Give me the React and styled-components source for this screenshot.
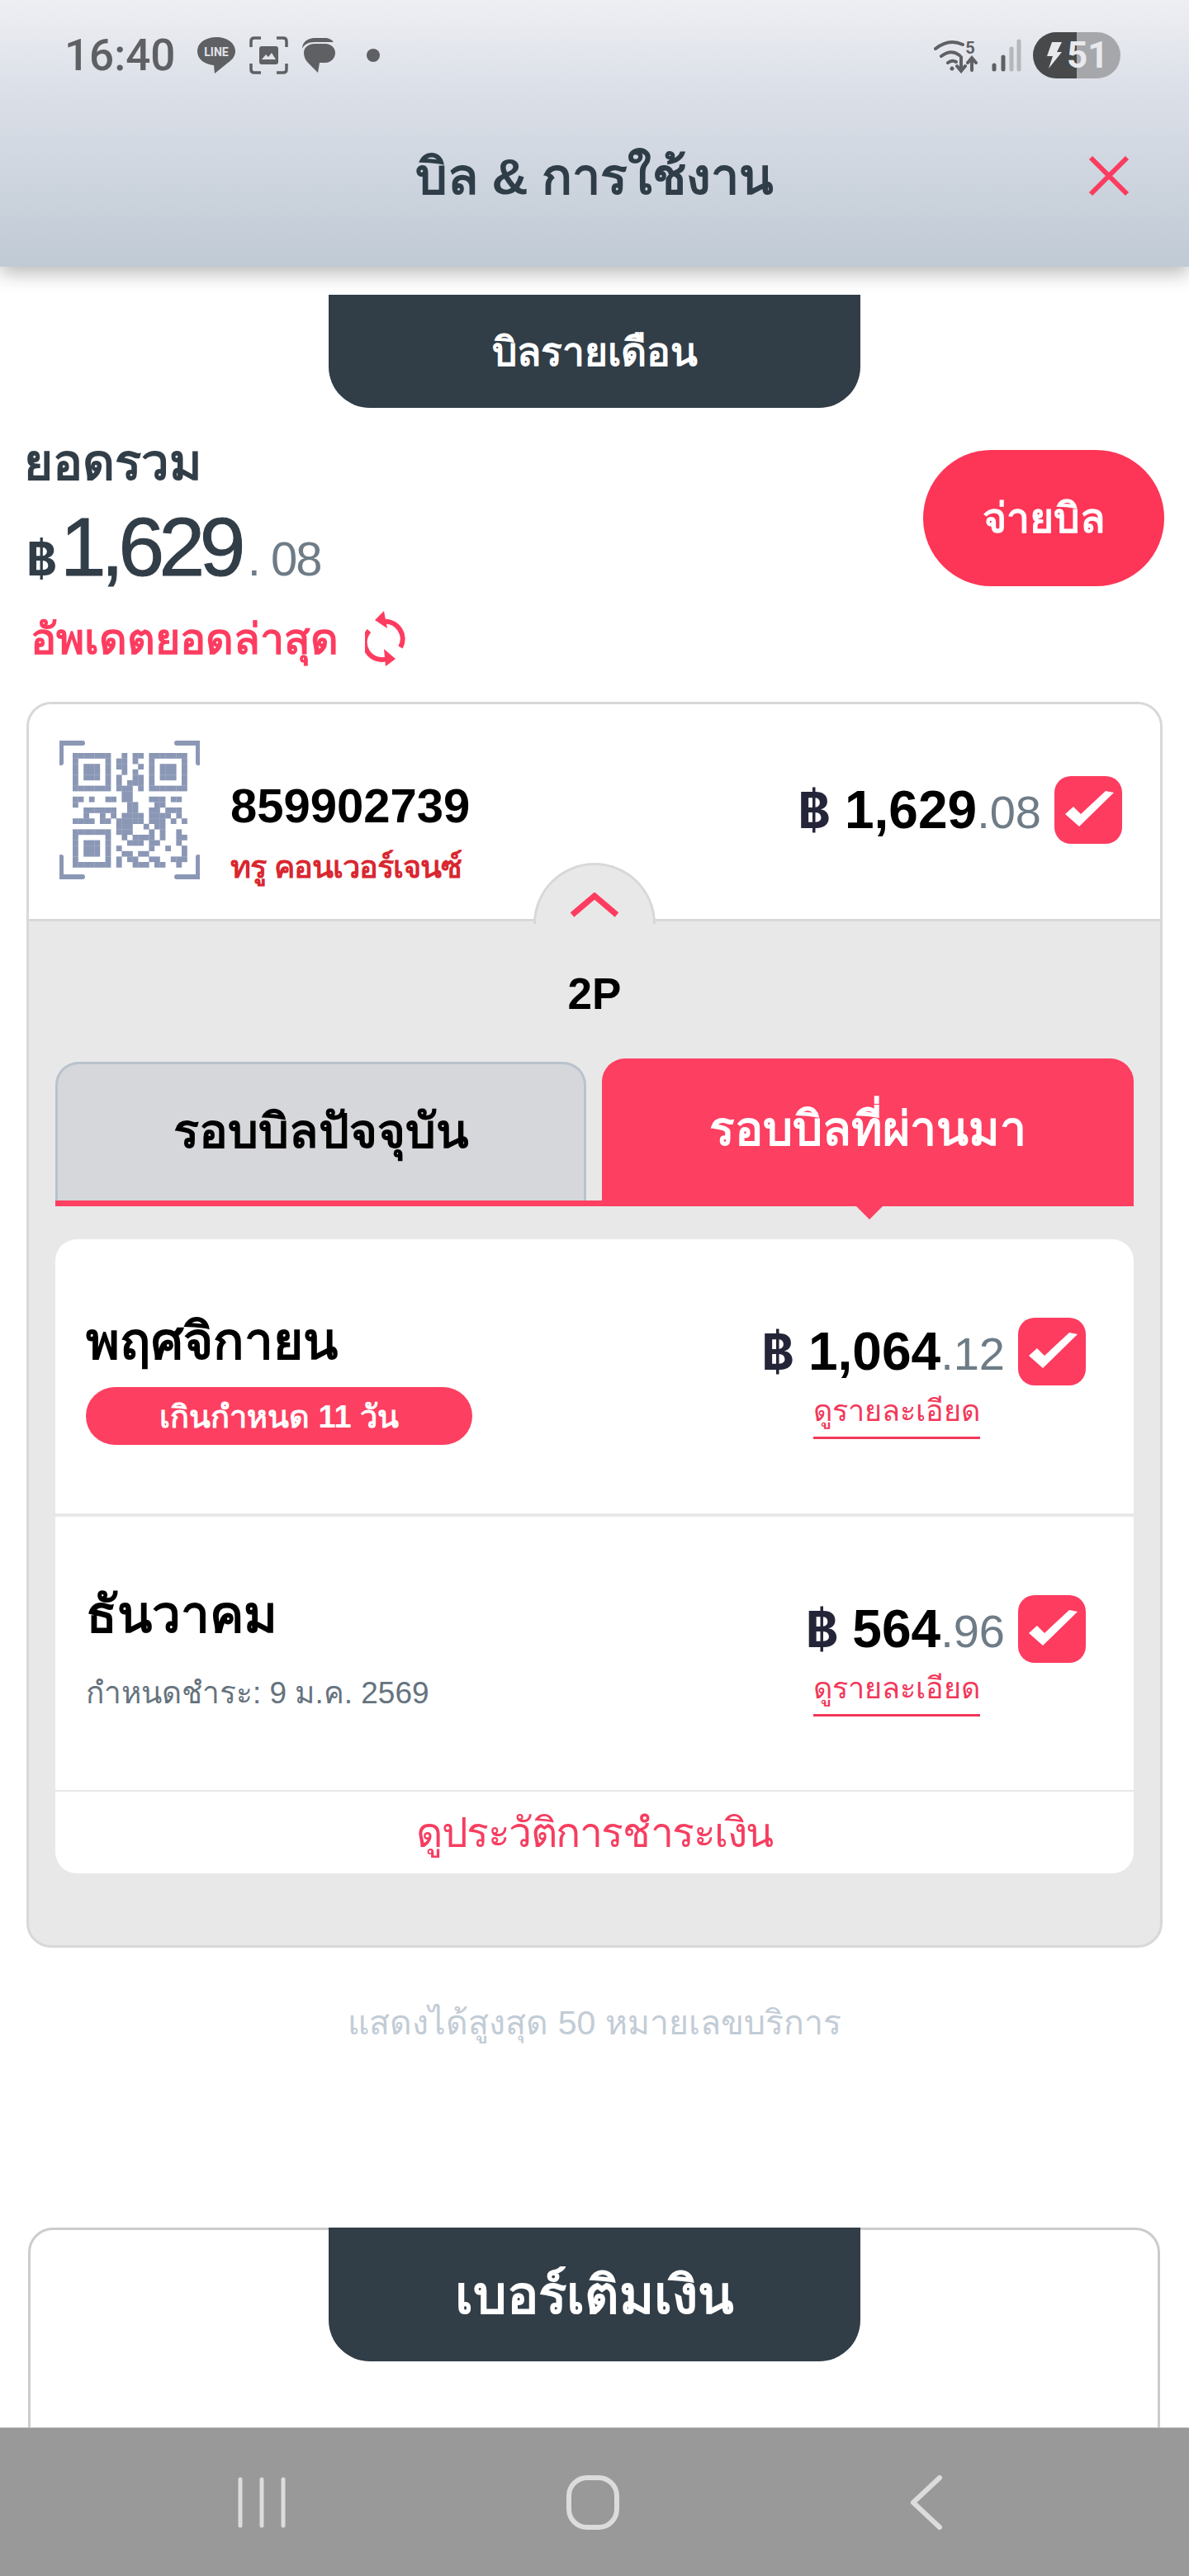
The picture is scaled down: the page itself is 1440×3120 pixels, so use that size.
import styled, { createGlobalStyle } from "styled-components";

const FONT = `"Liberation Sans", "Noto Sans", "DejaVu Sans", sans-serif`;
const RED = "#fd3c60";
const DARK = "#313d47";

const GlobalStyle = createGlobalStyle`
  html, body { margin: 0; padding: 0; background: #fff; }
  * { box-sizing: border-box; }
`;

const Page = styled.div`
  position: relative;
  width: 1440px;
  height: 3120px;
  overflow: hidden;
  background: #fff;
  font-family: ${FONT};
`;

const Header = styled.header`
  height: 323px;
  padding: 39px 74px 0 78px;
  background: linear-gradient(#eeeff3, #dde1e9 30%, #c0cad5);
  box-shadow: 0 8px 22px rgba(0, 0, 0, 0.28);
`;

const StatusBar = styled.div`
  display: flex;
  justify-content: space-between;
  align-items: center;
  height: 56px;
  padding-right: 9px;
  color: #5f6064;
`;

const StatusGroup = styled.div`
  display: flex;
  align-items: center;
  gap: ${(p) => p.$gap || 16}px;
`;

const Clock = styled.span`
  font-family: Roboto, sans-serif;
  font-size: 53px;
  font-weight: 500;
  margin-right: 10px;
`;

const Battery = styled.div`
  position: relative;
  width: 106px;
  height: 56px;
  border-radius: 28px;
  overflow: hidden;
  display: flex;
  align-items: center;
  background: linear-gradient(90deg, #48494b 50%, #a6a7ab 50%);
  color: #e8e9ec;
  padding-left: 15px;
  gap: 6px;
  font-family: Roboto, sans-serif;
  font-size: 44px;
  font-weight: 700;
`;

const TitleRow = styled.div`
  position: relative;
  display: flex;
  justify-content: center;
  align-items: center;
  margin-top: 88px;
  margin-left: -78px;
  margin-right: -74px;
  height: 60px;
`;

const Title = styled.h1`
  margin: 0;
  font-size: 61px;
  font-weight: 700;
  color: #2f3d49;
`;

const Close = styled.svg`
  position: absolute;
  right: 72px;
  top: 5px;
`;

const Tab = styled.div`
  display: flex;
  justify-content: center;
  align-items: center;
  width: 644px;
  height: ${(p) => p.$h}px;
  margin: 0 auto;
  background: ${DARK};
  color: #fff;
  font-size: ${(p) => p.$size}px;
  font-weight: 700;
  border-radius: 0 0 50px 50px;
`;

const Main = styled.main`
  padding: 34px 32px 0;
`;

const Summary = styled.section`
  display: flex;
  justify-content: space-between;
  align-items: flex-start;
  margin-top: 30px;
  height: 326px;
`;

const SummaryLabel = styled.div`
  font-size: 60px;
  font-weight: 700;
  color: ${DARK};
  line-height: 74px;
  margin-left: -3px;
`;

const SummaryAmount = styled.div`
  display: flex;
  align-items: baseline;
  color: ${DARK};
  height: 112px;
  line-height: 112px;
  margin-top: 8px;
`;

const Baht = styled.span`
  font-family: Inter, ${FONT};
  font-weight: 700;
  font-size: ${(p) => p.$size}px;
  color: ${(p) => p.$color || "#25253a"};
  margin-right: ${(p) => p.$gap || 0}px;
`;

const BigNumber = styled.span`
  font-size: 100px;
  letter-spacing: -6.5px;
  -webkit-text-stroke: 1px ${DARK};
`;

const BigDecimal = styled.span`
  font-size: 58px;
  color: #6e7c87;
  margin-left: 9px;
  letter-spacing: -2px;
`;

const UpdateRow = styled.div`
  display: flex;
  align-items: center;
  gap: 32px;
  margin-top: 14px;
  margin-left: 5px;
  font-size: 52px;
  font-weight: 700;
  color: ${RED};
`;

const PayButton = styled.button`
  width: 292px;
  height: 165px;
  margin-top: 21px;
  margin-right: -2px;
  border: 0;
  border-radius: 83px;
  background: #fd3557;
  color: #fff;
  font-family: inherit;
  font-size: 50px;
  font-weight: 700;
`;

const AccountCard = styled.section`
  position: relative;
  border: 3px solid #d8d8d8;
  border-radius: 30px;
  overflow: hidden;
  height: 1509px;
  background: #e8e8e8;
`;

const AccountTop = styled.div`
  display: flex;
  align-items: center;
  height: 263px;
  padding: 0 46px 4px 37px;
  background: #fff;
  border-bottom: 3px solid #d8d8d8;
`;

const AccountInfo = styled.div`
  margin-left: 37px;
  padding-top: 58px;
  flex: 1;
`;

const AccountNumber = styled.div`
  font-size: 58px;
  font-weight: 700;
  color: #000;
  line-height: 70px;
`;

const AccountPlan = styled.div`
  font-size: 38px;
  font-weight: 700;
  letter-spacing: -1px;
  color: #d9262f;
  margin-top: 8px;
`;

const Dome = styled.div`
  position: absolute;
  left: 611px;
  top: 192px;
  width: 148px;
  height: 74px;
  display: flex;
  justify-content: center;
  padding-top: 33px;
  background: #e8e8e8;
  border: 3px solid #d8d8d8;
  border-bottom: 0;
  border-radius: 74px 74px 0 0;
`;

const Plan = styled.div`
  text-align: center;
  font-size: 53px;
  font-weight: 700;
  color: #000;
  margin-top: 58px;
  line-height: 60px;
`;

const Tabs = styled.div`
  display: flex;
  align-items: flex-end;
  margin: 48px 32px 0;
  height: 179px;
  border-bottom: 7px solid #fd3f61;
`;

const BillTab = styled.div`
  position: relative;
  display: flex;
  justify-content: center;
  align-items: center;
  height: ${(p) => (p.$active ? 172 : 168)}px;
  width: ${(p) => (p.$active ? 644 : 643)}px;
  margin-left: ${(p) => (p.$active ? 19 : 0)}px;
  padding-bottom: 5px;
  font-size: ${(p) => (p.$active ? 57 : 58)}px;
  font-weight: 700;
  color: ${(p) => (p.$active ? "#fff" : "#000")};
  background: ${(p) => (p.$active ? "#fd3f61" : "#d6d7da")};
  border: 3px solid ${(p) => (p.$active ? "#fd3f61" : "#b9c2cc")};
  border-bottom: 0;
  border-radius: 28px 28px 0 0;
`;

const TabArrow = styled.span`
  position: absolute;
  left: 305px;
  bottom: -23px;
  border-left: 16px solid transparent;
  border-right: 16px solid transparent;
  border-top: 16px solid #fd3f61;
`;

const BillList = styled.div`
  margin: 40px 32px 0;
  background: #fff;
  border-radius: 26px;
  overflow: hidden;
`;

const BillRow = styled.div`
  display: flex;
  justify-content: space-between;
  height: ${(p) => p.$h}px;
  padding: 0 58px 0 37px;
  border-bottom: ${(p) => p.$line}px solid #e8e8e8;
`;

const BillInfo = styled.div`
  padding-top: ${(p) => p.$top}px;
`;

const Month = styled.div`
  font-size: 62px;
  font-weight: 700;
  color: #000;
  line-height: 76px;
`;

const OverdueBadge = styled.div`
  display: flex;
  justify-content: center;
  align-items: center;
  width: 468px;
  height: 70px;
  margin-top: 17px;
  border-radius: 35px;
  background: #fd3f61;
  color: #fff;
  font-size: 38px;
  font-weight: 700;
`;

const DueDate = styled.div`
  font-size: 37px;
  color: #66737e;
  margin-top: 26px;
`;

const PriceColumn = styled.div`
  display: flex;
  flex-direction: column;
  align-items: flex-end;
  padding-top: 95px;
`;

const PriceLine = styled.div`
  display: flex;
  align-items: center;
  gap: 16px;
`;

const Price = styled.div`
  display: flex;
  align-items: baseline;
  font-size: 64px;
  font-weight: 700;
  color: #000;
`;

const Decimal = styled.span`
  font-size: 56px;
  font-weight: 400;
  color: #6e7c87;
`;

const CheckBox = styled.div`
  display: flex;
  width: 82px;
  height: 82px;
  border-radius: 20px;
  background: #fd3c60;
`;

const DetailLink = styled.a`
  align-self: flex-end;
  width: 202px;
  margin-right: 128px;
  margin-top: 2px;
  padding-bottom: 3px;
  text-align: center;
  white-space: nowrap;
  font-size: 36px;
  color: #f2385a;
  border-bottom: 3px solid #f2385a;
`;

const HistoryLink = styled.div`
  height: 99px;
  display: flex;
  justify-content: center;
  align-items: center;
  font-size: 50px;
  letter-spacing: -1.5px;
  color: #f53e60;
`;

const MaxNote = styled.div`
  text-align: center;
  font-size: 41px;
  color: #c2ccd6;
  margin-top: 58px;
`;

const TopupCard = styled.section`
  position: absolute;
  left: 34px;
  right: 35px;
  top: 2698px;
  height: 500px;
  border: 3px solid #ccc;
  border-radius: 30px;
`;

const TopupTab = styled(Tab)`
  position: relative;
  top: -3px;
  width: 644px;
`;

const NavBar = styled.nav`
  position: absolute;
  left: 0;
  right: 0;
  bottom: 0;
  height: 180px;
  display: flex;
  justify-content: space-between;
  align-items: center;
  padding: 0 298px 0 287px;
  background: #999;
  border-top: 1px solid #b5b5b5;
`;

const HomeIcon = styled.svg`
  margin-right: 14px;
`;

const QR_ROWS = [
  "1111111..1.11.1111111",
  "1000001.11.1..1000001",
  "1011101.11..1.1011101",
  "1011101..1.1..1011101",
  "1011101.1..11.1011101",
  "1000001.1.111.1000001",
  "1111111.111.1.1111111",
  ".........11..........",
  "11.1..11.11...111.11.",
  "1.........11...11....",
  "..111111..11..11.111.",
  "..1..1.1.1111.1111.1.",
  "1111.11.11111.111.1.1",
  "........111..1.11....",
  "1111111.111...1.1..1.",
  "1000001..1.1111.1..11",
  "1011101...111.11...1.",
  "1011101.1.....1..1..1",
  "1011101..11.11......1",
  "1000001.1.11..11..111",
  "1111111.1..111.11..1.",
];

function QrIcon() {
  const size = 6.6;
  return (
    <svg width="170" height="170" viewBox="0 0 170 170" fill="#8a97b5" style={{ flex: "none" }}>
      <path d="M2 28V4h26M142 4h26v24M2 142v24h26M142 166h26v-24" fill="none" stroke="#8a97b5" strokeWidth="6" strokeLinecap="round" />
      {QR_ROWS.map((row, r) =>
        row.split("").map((cell, c) =>
          cell === "1" ? (
            <rect key={`${r}-${c}`} x={16 + c * size} y={16 + r * size} width={size + 0.2} height={size + 0.2} />
          ) : null
        )
      )}
    </svg>
  );
}

function Check() {
  return (
    <svg width="82" height="82" viewBox="0 0 82 82">
      <path d="M13 46l10-9 9 9 30-28 10 2-42 41z" fill="#fff" />
    </svg>
  );
}

function BillPrice({ whole, cents }) {
  return (
    <PriceLine>
      <Price>
        <Baht $size={60} $gap={17}>฿</Baht>
        {whole}
        <Decimal>.{cents}</Decimal>
      </Price>
      <CheckBox><Check /></CheckBox>
    </PriceLine>
  );
}

export default function App() {
  return (
    <Page>
      <GlobalStyle />
      <Header>
        <StatusBar>
          <StatusGroup $gap={16}>
            <Clock>16:40</Clock>
            <svg width="48" height="46" viewBox="0 0 48 46">
              <path d="M24 1C11 1 1 8 1 18s9 16 20 17l1 10 16-13c6-4 9-9 9-14C47 8 37 1 24 1z" fill="#5f6064" />
              <text x="24" y="24" textAnchor="middle" fontFamily="Roboto, sans-serif" fontSize="14" fontWeight="700" fill="#e2e4ea">LINE</text>
            </svg>
            <svg width="47" height="46" viewBox="0 0 47 46" fill="none" stroke="#5f6064" strokeWidth="3.5">
              <path d="M2 13V6q0-4 4-4h8M33 2h8q4 0 4 4v7M2 33v7q0 4 4 4h8M33 44h8q4 0 4-4v-7" />
              <rect x="12" y="12" width="23" height="22" rx="3" fill="#5f6064" stroke="none" />
              <path d="M15 28l5-6 3 3 4-5 5 8z" fill="#e2e4ea" stroke="none" />
            </svg>
            <svg width="42" height="44" viewBox="0 0 42 44">
              <path d="M1 14C1 6 8 1 16 1h12c5 0 9 2 11 5H16C8 6 3 9 1 14z" fill="#5f6064" />
              <path d="M3 19c0-7 6-11 13-11h13c7 0 12 5 12 11s-5 12-12 12h-7l-2 12L8 31c-3-3-5-7-5-12z" fill="#5f6064" />
            </svg>
            <svg width="16" height="16" viewBox="0 0 16 16" style={{ marginLeft: 21 }}>
              <circle cx="8" cy="8" r="8" fill="#5f6064" />
            </svg>
          </StatusGroup>
          <StatusGroup $gap={14}>
            <svg width="56" height="44" viewBox="0 0 56 44" fill="none" stroke="#5f6064" strokeWidth="4" strokeLinecap="round">
              <path d="M2 14q16-13 33-5M9 23q12-9 22-1M17 31q5-4 10-1" />
              <circle cx="22" cy="38" r="2.5" fill="#5f6064" stroke="none" />
              <path d="M33 24v16m-5-5l5 6 5-6M46 40V26m-5 5l5-6 5 6" />
              <text x="44" y="20" textAnchor="middle" fontFamily="Roboto, sans-serif" fontSize="20" fontWeight="700" fill="#5f6064" stroke="none">5</text>
            </svg>
            <svg width="36" height="40" viewBox="0 0 36 40" fill="none" strokeWidth="5" strokeLinecap="round">
              <path d="M3 37v-5" stroke="#5f6064" />
              <path d="M14 37V22" stroke="#5f6064" />
              <path d="M24 37V12" stroke="#b5b7bb" />
              <path d="M33 37V3" stroke="#b5b7bb" />
            </svg>
            <Battery>
              <svg width="20" height="32" viewBox="0 0 20 32">
                <path d="M8 0h12l-6 12h6L4 32l5-15H2z" fill="#e8e9ec" />
              </svg>
              <span>51</span>
            </Battery>
          </StatusGroup>
        </StatusBar>
        <TitleRow>
          <Title>บิล & การใช้งาน</Title>
          <Close width="50" height="50" viewBox="0 0 50 50">
            <path d="M3 3l44 44M47 3L3 47" stroke="#fb3c60" strokeWidth="6" fill="none" />
          </Close>
        </TitleRow>
      </Header>

      <Main>
        <Tab $h={137} $size={48}>บิลรายเดือน</Tab>
        <Summary>
          <div>
            <SummaryLabel>ยอดรวม</SummaryLabel>
            <SummaryAmount>
              <Baht $size={56} $color={DARK} $gap={4}>฿</Baht>
              <BigNumber>1,629</BigNumber>
              <BigDecimal>. 08</BigDecimal>
            </SummaryAmount>
            <UpdateRow>
              อัพเดตยอดล่าสุด
              <svg width="50" height="68" viewBox="0 0 50 68" fill="none" stroke="#fd3c60" strokeWidth="6">
                <path d="M22 13A21 21 0 0 1 43 44" />
                <path d="M27 58A21 21 0 0 1 5 24" />
                <path d="M12 11L23 0l4 21z" fill="#fd3c60" stroke="none" />
                <path d="M37 58L25 67l-2-21z" fill="#fd3c60" stroke="none" />
              </svg>
            </UpdateRow>
          </div>
          <PayButton>จ่ายบิล</PayButton>
        </Summary>

        <AccountCard>
          <AccountTop>
            <QrIcon />
            <AccountInfo>
              <AccountNumber>859902739</AccountNumber>
              <AccountPlan>ทรู คอนเวอร์เจนซ์</AccountPlan>
            </AccountInfo>
            <BillPrice whole="1,629" cents="08" />
          </AccountTop>
          <Dome>
            <svg width="60" height="30" viewBox="0 0 60 30">
              <path d="M3 27L30 4l27 23" fill="none" stroke="#fd3c60" strokeWidth="7" />
            </svg>
          </Dome>
          <Plan>2P</Plan>
          <Tabs>
            <BillTab>รอบบิลปัจจุบัน</BillTab>
            <BillTab $active>
              รอบบิลที่ผ่านมา
              <TabArrow />
            </BillTab>
          </Tabs>
          <BillList>
            <BillRow $h={336} $line={4}>
              <BillInfo $top={86}>
                <Month>พฤศจิกายน</Month>
                <OverdueBadge>เกินกำหนด 11 วัน</OverdueBadge>
              </BillInfo>
              <PriceColumn>
                <BillPrice whole="1,064" cents="12" />
                <DetailLink>ดูรายละเอียด</DetailLink>
              </PriceColumn>
            </BillRow>
            <BillRow $h={333} $line={2}>
              <BillInfo $top={81}>
                <Month>ธันวาคม</Month>
                <DueDate>กำหนดชำระ: 9 ม.ค. 2569</DueDate>
              </BillInfo>
              <PriceColumn>
                <BillPrice whole="564" cents="96" />
                <DetailLink>ดูรายละเอียด</DetailLink>
              </PriceColumn>
            </BillRow>
            <HistoryLink>ดูประวัติการชำระเงิน</HistoryLink>
          </BillList>
        </AccountCard>

        <MaxNote>แสดงได้สูงสุด 50 หมายเลขบริการ</MaxNote>
      </Main>

      <TopupCard>
        <TopupTab $h={162} $size={64}>เบอร์เติมเงิน</TopupTab>
      </TopupCard>

      <NavBar>
        <svg width="60" height="62" viewBox="0 0 60 62" fill="none" stroke="#dcdcdc" strokeWidth="5" strokeLinecap="round">
          <path d="M4 3v56M30 3v56M56 3v56" />
        </svg>
        <HomeIcon width="64" height="66" viewBox="0 0 64 66" fill="none" stroke="#dcdcdc" strokeWidth="6">
          <rect x="3" y="3" width="58" height="60" rx="22" />
        </HomeIcon>
        <svg width="40" height="66" viewBox="0 0 40 66" fill="none" stroke="#dcdcdc" strokeWidth="6" strokeLinecap="round" strokeLinejoin="round">
          <path d="M36 3L4 33l32 30" />
        </svg>
      </NavBar>
    </Page>
  );
}
